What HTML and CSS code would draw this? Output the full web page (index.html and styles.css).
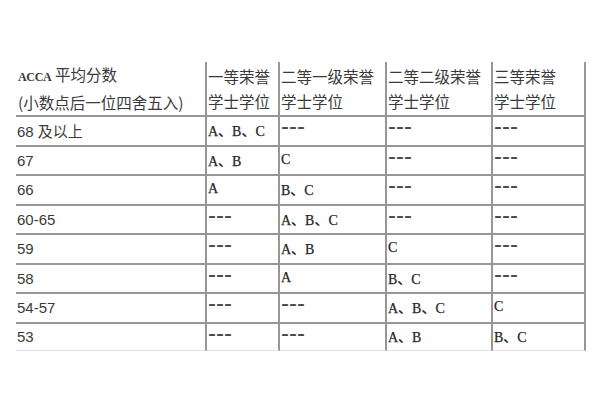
FILE: index.html
```html
<!DOCTYPE html>
<html lang="zh-CN">
<head>
<meta charset="utf-8">
<title>ACCA 学位等级</title>
<link rel="stylesheet" href="styles.css">
</head>
<body>
<table class="grade-table">
  <colgroup>
    <col class="c1"><col class="c2"><col class="c3"><col class="c4"><col class="c5">
  </colgroup>
  <thead>
    <tr class="head-row">
      <th class="score-head"><span class="latin">ACCA</span> 平均分数<br>(小数点后一位四舍五入)</th>
      <th>一等荣誉<br>学士学位</th>
      <th>二等一级荣誉<br>学士学位</th>
      <th>二等二级荣誉<br>学士学位</th>
      <th>三等荣誉<br>学士学位</th>
    </tr>
  </thead>
  <tbody>
    <tr><td class="score">68 及以上</td><td>A、B、C</td><td class="none">---</td><td class="none">---</td><td class="none">---</td></tr>
    <tr><td class="score">67</td><td>A、B</td><td>C</td><td class="none">---</td><td class="none">---</td></tr>
    <tr><td class="score">66</td><td>A</td><td>B、C</td><td class="none">---</td><td class="none">---</td></tr>
    <tr><td class="score">60-65</td><td class="none">---</td><td>A、B、C</td><td class="none">---</td><td class="none">---</td></tr>
    <tr><td class="score">59</td><td class="none">---</td><td>A、B</td><td>C</td><td class="none">---</td></tr>
    <tr><td class="score">58</td><td class="none">---</td><td>A</td><td>B、C</td><td class="none">---</td></tr>
    <tr><td class="score">54-57</td><td class="none">---</td><td class="none">---</td><td>A、B、C</td><td>C</td></tr>
    <tr class="last"><td class="score">53</td><td class="none">---</td><td class="none">---</td><td>A、B</td><td>B、C</td></tr>
  </tbody>
</table>
</body>
</html>
```

FILE: styles.css
```css
html, body {
  margin: 0;
  background: #ffffff;
}
body {
  padding: 62px 0 0 16px;
  color: #333333;
}
.grade-table {
  border-collapse: separate;
  border-spacing: 0;
  table-layout: fixed;
  width: 570px;
}
.c1 { width: 191px; }
.c2 { width: 73px; }
.c3 { width: 107px; }
.c4 { width: 106px; }
.c5 { width: 93px; }

.grade-table th,
.grade-table td {
  box-sizing: border-box;
  border-right: 2px solid #979797;
  border-bottom: 2px solid #979797;
  padding: 0 0 0 1px;
  text-align: left;
  vertical-align: middle;
  white-space: nowrap;
  overflow: hidden;
}
.grade-table th {
  font-family: "Noto Sans CJK SC", sans-serif;
  font-weight: normal;
  font-size: 15.5px;
  line-height: 25px;
  height: 52px;
  color: #3a3a3a;
}
.grade-table th.score-head {
  padding-left: 2px;
}
.latin {
  font-family: "Liberation Serif", serif;
  font-size: 12px;
  font-weight: bold;
  letter-spacing: -0.3px;
}
.grade-table td {
  height: 29.5px;
  font-family: "Liberation Serif", "Noto Sans CJK SC", serif;
  font-size: 14px;
  color: #262626;
  -webkit-text-stroke: 0.25px #262626;
  padding-bottom: 1px;
}
.grade-table td.none {
  font-family: "Liberation Sans", sans-serif;
  font-size: 24px;
  line-height: 18px;
  vertical-align: top;
  overflow: visible;
  padding: 0 0 0 1px;
  color: #4a4a4a;
  -webkit-text-stroke: 0;
}
.grade-table td.score {
  font-family: "Liberation Sans", "Noto Sans CJK SC", sans-serif;
  font-size: 15px;
  padding-left: 1px;
  padding-bottom: 0;
  -webkit-text-stroke: 0;
  color: #3a3a3a;
}
.grade-table tr.last td {
  height: 27px;
  border-bottom: 1px solid #e2e2e2;
}
```
